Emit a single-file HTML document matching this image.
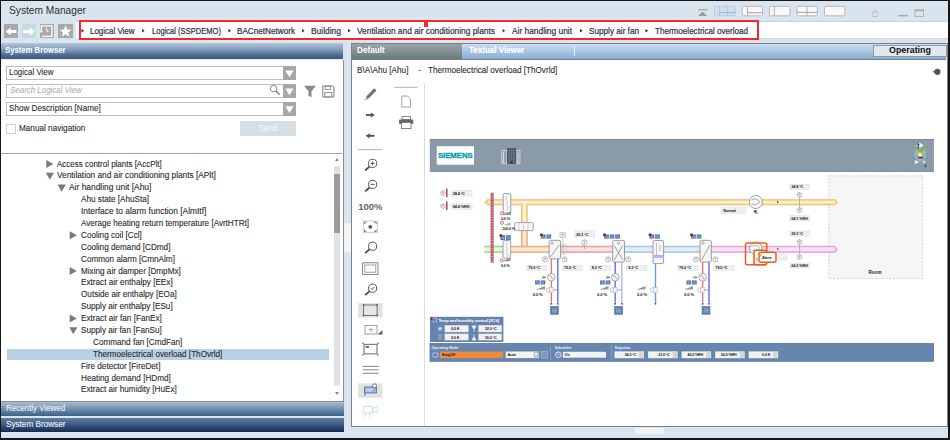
<!DOCTYPE html>
<html><head><meta charset="utf-8">
<style>
*{margin:0;padding:0;box-sizing:border-box}
html,body{width:950px;height:440px;overflow:hidden;background:#161616}
body{position:relative;font-family:"Liberation Sans",sans-serif;font-size:8.6px;color:#222}
.a{position:absolute}
.t{position:absolute;white-space:nowrap;line-height:1}
svg{position:absolute;left:0;top:0}
</style></head><body>
<div class="a" style="left:1.00px;top:1.00px;width:947.00px;height:437.00px;background:#d9e5ee"></div>
<div class="t" style="left:8.90px;top:4.69px;font-size:11px;letter-spacing:0px;color:#2e2e2e;font-weight:normal;font-style:normal;transform:scaleX(0.9261);transform-origin:0 0;">System Manager</div>
<div class="a" style="left:4.00px;top:23.80px;width:14.40px;height:14.20px;background:#a9a9a9"></div>
<div class="a" style="left:21.60px;top:23.80px;width:14.40px;height:14.20px;background:#c1dde2"></div>
<div class="a" style="left:39.80px;top:23.60px;width:14.00px;height:14.20px;background:#a9a9a9"></div>
<div class="a" style="left:58.40px;top:23.80px;width:14.40px;height:14.20px;background:#a9a9a9"></div>
<div class="a" style="left:76.00px;top:21.30px;width:872.00px;height:17.20px;background:#fff;border-top:1.2px solid #c5d3e0"></div>
<div class="a" style="left:76.00px;top:38.40px;width:872.00px;height:0.90px;background:#cfdae4"></div>
<div class="a" style="left:79.10px;top:20.10px;width:679.90px;height:19.90px;border:2px solid #f2282e"></div>
<div class="a" style="left:424.10px;top:20.50px;width:3.90px;height:6.30px;background:#f2282e"></div>
<div class="t" style="left:90.30px;top:26.75px;font-size:8.8px;letter-spacing:0px;color:#26314a;font-weight:normal;font-style:normal;transform:scaleX(0.9036);transform-origin:0 0;-webkit-text-stroke:0.2px #26314a;">Logical View</div>
<div class="t" style="left:151.60px;top:26.75px;font-size:8.8px;letter-spacing:0px;color:#26314a;font-weight:normal;font-style:normal;transform:scaleX(0.8603);transform-origin:0 0;-webkit-text-stroke:0.2px #26314a;">Logical (SSPDEMO)</div>
<div class="t" style="left:237.00px;top:26.75px;font-size:8.8px;letter-spacing:0px;color:#26314a;font-weight:normal;font-style:normal;transform:scaleX(0.9265);transform-origin:0 0;-webkit-text-stroke:0.2px #26314a;">BACnetNetwork</div>
<div class="t" style="left:310.80px;top:26.75px;font-size:8.8px;letter-spacing:0px;color:#26314a;font-weight:normal;font-style:normal;transform:scaleX(0.9581);transform-origin:0 0;-webkit-text-stroke:0.2px #26314a;">Building</div>
<div class="t" style="left:357.40px;top:26.75px;font-size:8.8px;letter-spacing:0px;color:#26314a;font-weight:normal;font-style:normal;transform:scaleX(0.9497);transform-origin:0 0;-webkit-text-stroke:0.2px #26314a;">Ventilation and air conditioning plants</div>
<div class="t" style="left:512.00px;top:26.75px;font-size:8.8px;letter-spacing:0px;color:#26314a;font-weight:normal;font-style:normal;transform:scaleX(0.9507);transform-origin:0 0;-webkit-text-stroke:0.2px #26314a;">Air handling unit</div>
<div class="t" style="left:588.60px;top:26.75px;font-size:8.8px;letter-spacing:0px;color:#26314a;font-weight:normal;font-style:normal;transform:scaleX(0.9292);transform-origin:0 0;-webkit-text-stroke:0.2px #26314a;">Supply air fan</div>
<div class="t" style="left:654.80px;top:26.75px;font-size:8.8px;letter-spacing:0px;color:#26314a;font-weight:normal;font-style:normal;transform:scaleX(0.9185);transform-origin:0 0;-webkit-text-stroke:0.2px #26314a;">Thermoelectrical overload</div>
<div class="a" style="left:1.00px;top:43.40px;width:342.00px;height:16.10px;background:linear-gradient(#b4c6d9 0%,#809bb9 45%,#46678e 85%,#3e5e86 100%);border-bottom:1px solid #555d66"></div>
<div class="t" style="left:4.60px;top:45.65px;font-size:8.8px;letter-spacing:0px;color:#fff;font-weight:bold;font-style:normal;transform:scaleX(0.8772);transform-origin:0 0;">System Browser</div>
<div class="a" style="left:1.00px;top:59.50px;width:343.00px;height:342.50px;background:#fff;border-right:1.5px solid #8a8e94;border-bottom:1.5px solid #8a8e94"></div>
<div class="a" style="left:6.20px;top:66.20px;width:289.80px;height:14.30px;background:#fff;border:1px solid #bdbdbd"></div>
<div class="a" style="left:283.00px;top:66.20px;width:13.00px;height:14.30px;background:#a7a7a7"></div>
<div class="t" style="left:9.00px;top:68.37px;font-size:8.9px;letter-spacing:0px;color:#2c2c2c;font-weight:normal;font-style:normal;transform:scaleX(0.8954);transform-origin:0 0;-webkit-text-stroke:0.1px #2c2c2c;">Logical View</div>
<div class="a" style="left:6.20px;top:84.20px;width:289.80px;height:14.30px;background:#fff;border:1px solid #bdbdbd"></div>
<div class="a" style="left:283.00px;top:84.20px;width:13.00px;height:14.30px;background:#a7a7a7"></div>
<div class="t" style="left:10.00px;top:86.37px;font-size:8.9px;letter-spacing:0px;color:#a8a8a8;font-weight:normal;font-style:italic;transform:scaleX(0.8946);transform-origin:0 0;">Search Logical View</div>
<div class="a" style="left:6.20px;top:102.00px;width:289.80px;height:14.30px;background:#fff;border:1px solid #bdbdbd"></div>
<div class="a" style="left:283.00px;top:102.00px;width:13.00px;height:14.30px;background:#a7a7a7"></div>
<div class="t" style="left:9.00px;top:104.17px;font-size:8.9px;letter-spacing:0px;color:#2c2c2c;font-weight:normal;font-style:normal;transform:scaleX(0.9162);transform-origin:0 0;-webkit-text-stroke:0.1px #2c2c2c;">Show Description [Name]</div>
<div class="a" style="left:6.20px;top:123.50px;width:9.60px;height:10.30px;background:#fff;border:1px solid #d0d0d0"></div>
<div class="t" style="left:18.70px;top:124.07px;font-size:8.9px;letter-spacing:0px;color:#2c2c2c;font-weight:normal;font-style:normal;transform:scaleX(0.9219);transform-origin:0 0;-webkit-text-stroke:0.1px #2c2c2c;">Manual navigation</div>
<div class="a" style="left:240.00px;top:121.30px;width:56.00px;height:14.40px;background:#d5dee3"></div>
<div class="t" style="left:258.60px;top:124.07px;font-size:8.9px;letter-spacing:0px;color:#f7f9fb;font-weight:normal;font-style:normal;transform:scaleX(0.8900);transform-origin:0 0;">Send</div>
<div class="a" style="left:1.00px;top:152.80px;width:341.00px;height:1.20px;background:#a0a4a8"></div>
<div class="t" style="left:57.30px;top:159.57px;font-size:8.9px;letter-spacing:0px;color:#2c2c2c;font-weight:normal;font-style:normal;transform:scaleX(0.8995);transform-origin:0 0;-webkit-text-stroke:0.12px #2c2c2c;">Access control plants [AccPlt]</div>
<div class="t" style="left:57.30px;top:171.46px;font-size:8.9px;letter-spacing:0px;color:#2c2c2c;font-weight:normal;font-style:normal;transform:scaleX(0.9326);transform-origin:0 0;-webkit-text-stroke:0.12px #2c2c2c;">Ventilation and air conditioning plants [APlt]</div>
<div class="t" style="left:69.00px;top:183.35px;font-size:8.9px;letter-spacing:0px;color:#2c2c2c;font-weight:normal;font-style:normal;transform:scaleX(0.9485);transform-origin:0 0;-webkit-text-stroke:0.12px #2c2c2c;">Air handling unit [Ahu]</div>
<div class="t" style="left:81.30px;top:195.24px;font-size:8.9px;letter-spacing:0px;color:#2c2c2c;font-weight:normal;font-style:normal;transform:scaleX(0.9199);transform-origin:0 0;-webkit-text-stroke:0.12px #2c2c2c;">Ahu state [AhuSta]</div>
<div class="t" style="left:81.30px;top:207.13px;font-size:8.9px;letter-spacing:0px;color:#2c2c2c;font-weight:normal;font-style:normal;transform:scaleX(0.9447);transform-origin:0 0;-webkit-text-stroke:0.12px #2c2c2c;">Interface to alarm function [AlmItf]</div>
<div class="t" style="left:81.30px;top:219.02px;font-size:8.9px;letter-spacing:0px;color:#2c2c2c;font-weight:normal;font-style:normal;transform:scaleX(0.9123);transform-origin:0 0;-webkit-text-stroke:0.12px #2c2c2c;">Average heating return temperature [AvrtHTRt]</div>
<div class="t" style="left:81.30px;top:230.91px;font-size:8.9px;letter-spacing:0px;color:#2c2c2c;font-weight:normal;font-style:normal;transform:scaleX(0.9199);transform-origin:0 0;-webkit-text-stroke:0.12px #2c2c2c;">Cooling coil [Ccl]</div>
<div class="t" style="left:81.30px;top:242.80px;font-size:8.9px;letter-spacing:0px;color:#2c2c2c;font-weight:normal;font-style:normal;transform:scaleX(0.9199);transform-origin:0 0;-webkit-text-stroke:0.12px #2c2c2c;">Cooling demand [CDmd]</div>
<div class="t" style="left:81.30px;top:254.69px;font-size:8.9px;letter-spacing:0px;color:#2c2c2c;font-weight:normal;font-style:normal;transform:scaleX(0.9199);transform-origin:0 0;-webkit-text-stroke:0.12px #2c2c2c;">Common alarm [CmnAlm]</div>
<div class="t" style="left:81.30px;top:266.58px;font-size:8.9px;letter-spacing:0px;color:#2c2c2c;font-weight:normal;font-style:normal;transform:scaleX(0.9199);transform-origin:0 0;-webkit-text-stroke:0.12px #2c2c2c;">Mixing air damper [DmpMx]</div>
<div class="t" style="left:81.30px;top:278.47px;font-size:8.9px;letter-spacing:0px;color:#2c2c2c;font-weight:normal;font-style:normal;transform:scaleX(0.9199);transform-origin:0 0;-webkit-text-stroke:0.12px #2c2c2c;">Extract air enthalpy [EEx]</div>
<div class="t" style="left:81.30px;top:290.36px;font-size:8.9px;letter-spacing:0px;color:#2c2c2c;font-weight:normal;font-style:normal;transform:scaleX(0.9199);transform-origin:0 0;-webkit-text-stroke:0.12px #2c2c2c;">Outside air enthalpy [EOa]</div>
<div class="t" style="left:81.30px;top:302.25px;font-size:8.9px;letter-spacing:0px;color:#2c2c2c;font-weight:normal;font-style:normal;transform:scaleX(0.9199);transform-origin:0 0;-webkit-text-stroke:0.12px #2c2c2c;">Supply air enthalpy [ESu]</div>
<div class="t" style="left:81.30px;top:314.14px;font-size:8.9px;letter-spacing:0px;color:#2c2c2c;font-weight:normal;font-style:normal;transform:scaleX(0.9199);transform-origin:0 0;-webkit-text-stroke:0.12px #2c2c2c;">Extract air fan [FanEx]</div>
<div class="t" style="left:81.30px;top:326.03px;font-size:8.9px;letter-spacing:0px;color:#2c2c2c;font-weight:normal;font-style:normal;transform:scaleX(0.9199);transform-origin:0 0;-webkit-text-stroke:0.12px #2c2c2c;">Supply air fan [FanSu]</div>
<div class="t" style="left:93.00px;top:337.92px;font-size:8.9px;letter-spacing:0px;color:#2c2c2c;font-weight:normal;font-style:normal;transform:scaleX(0.9199);transform-origin:0 0;-webkit-text-stroke:0.12px #2c2c2c;">Command fan [CmdFan]</div>
<div class="a" style="left:6.60px;top:348.84px;width:322.70px;height:10.80px;background:#b9d1e6"></div>
<div class="t" style="left:93.00px;top:349.81px;font-size:8.9px;letter-spacing:0px;color:#2c2c2c;font-weight:normal;font-style:normal;transform:scaleX(0.9168);transform-origin:0 0;-webkit-text-stroke:0.12px #2c2c2c;">Thermoelectrical overload [ThOvrld]</div>
<div class="t" style="left:81.30px;top:361.70px;font-size:8.9px;letter-spacing:0px;color:#2c2c2c;font-weight:normal;font-style:normal;transform:scaleX(0.9199);transform-origin:0 0;-webkit-text-stroke:0.12px #2c2c2c;">Fire detector [FireDet]</div>
<div class="t" style="left:81.30px;top:373.59px;font-size:8.9px;letter-spacing:0px;color:#2c2c2c;font-weight:normal;font-style:normal;transform:scaleX(0.9199);transform-origin:0 0;-webkit-text-stroke:0.12px #2c2c2c;">Heating demand [HDmd]</div>
<div class="t" style="left:81.30px;top:385.48px;font-size:8.9px;letter-spacing:0px;color:#2c2c2c;font-weight:normal;font-style:normal;transform:scaleX(0.9155);transform-origin:0 0;-webkit-text-stroke:0.12px #2c2c2c;">Extract air humidity [HuEx]</div>
<div class="a" style="left:333.90px;top:166.40px;width:5.70px;height:219.60px;background:#dfe3e6"></div>
<div class="a" style="left:333.90px;top:174.20px;width:5.70px;height:59.10px;background:#9c9c9c"></div>
<div class="a" style="left:334.5px;top:157.5px;width:0;height:0;border-bottom:3px solid #8a8a8a;border-left:2.5px solid transparent;border-right:2.5px solid transparent"></div>
<div class="a" style="left:334.5px;top:391.5px;width:0;height:0;border-top:3px solid #8a8a8a;border-left:2.5px solid transparent;border-right:2.5px solid transparent"></div>
<div class="a" style="left:344.00px;top:222.80px;width:6.50px;height:29.20px;background:#f2f4f6"></div>
<div class="a" style="left:1.00px;top:401.60px;width:343.00px;height:14.40px;background:linear-gradient(#a7bdd5,#3d5f86)"></div>
<div class="t" style="left:5.70px;top:404.21px;font-size:9.2px;letter-spacing:0px;color:#e8eef5;font-weight:normal;font-style:normal;transform:scaleX(0.8675);transform-origin:0 0;-webkit-text-stroke:0.15px #e8eef5;">Recently Viewed</div>
<div class="a" style="left:1.00px;top:418.00px;width:343.00px;height:13.80px;background:linear-gradient(#5f7fa5,#142c52)"></div>
<div class="t" style="left:5.70px;top:420.21px;font-size:9.2px;letter-spacing:0px;color:#e8eef5;font-weight:normal;font-style:normal;transform:scaleX(0.8884);transform-origin:0 0;-webkit-text-stroke:0.15px #e8eef5;">System Browser</div>
<div class="a" style="left:350.50px;top:43.00px;width:597.00px;height:384.40px;background:#fff;border:1.6px solid #7d8186"></div>
<div class="a" style="left:634.70px;top:427.60px;width:29.70px;height:6.10px;background:#f1f2f3"></div>
<div class="a" style="left:352.00px;top:43.60px;width:110.30px;height:15.40px;background:linear-gradient(#9ba5a7,#6c7a7a)"></div>
<div class="a" style="left:462.30px;top:43.60px;width:483.70px;height:15.40px;background:linear-gradient(#cbdef1,#87acd3)"></div>
<div class="a" style="left:352.00px;top:59.00px;width:594.00px;height:1.00px;background:#6d7f8f"></div>
<div class="a" style="left:573.80px;top:45.70px;width:1.00px;height:10.00px;background:#e6eef6"></div>
<div class="t" style="left:356.70px;top:45.95px;font-size:8.8px;letter-spacing:0px;color:#fff;font-weight:bold;font-style:normal;transform:scaleX(0.9287);transform-origin:0 0;">Default</div>
<div class="t" style="left:468.50px;top:45.95px;font-size:8.8px;letter-spacing:0px;color:#ffffff;font-weight:bold;font-style:normal;transform:scaleX(0.9126);transform-origin:0 0;-webkit-text-stroke:0.15px #fff;">Textual Viewer</div>
<div class="a" style="left:873.20px;top:44.60px;width:73.40px;height:12.40px;background:#e3e8ee;border:1px solid #8f9aa6"></div>
<div class="t" style="left:888.70px;top:45.87px;font-size:8.9px;letter-spacing:0px;color:#111;font-weight:bold;font-style:normal;transform:scaleX(0.9992);transform-origin:0 0;">Operating</div>
<div class="t" style="left:356.70px;top:65.97px;font-size:8.9px;letter-spacing:0px;color:#2c2c2c;font-weight:normal;font-style:normal;transform:scaleX(0.9229);transform-origin:0 0;-webkit-text-stroke:0.1px #2c2c2c;">B\A\Ahu [Ahu]</div>
<div class="t" style="left:418.00px;top:66.22px;font-size:8.6px;letter-spacing:-0.3px;color:#333;font-weight:normal;font-style:normal;">-</div>
<div class="t" style="left:428.00px;top:65.97px;font-size:8.9px;letter-spacing:0px;color:#2c2c2c;font-weight:normal;font-style:normal;transform:scaleX(0.9161);transform-origin:0 0;-webkit-text-stroke:0.1px #2c2c2c;">Thermoelectrical overload [ThOvrld]</div>
<svg width="950" height="440" viewBox="0 0 950 440">
<rect x="358.2" y="149.1" width="24.2" height="1" fill="#b4b4b4"/>
<rect x="394" y="86.8" width="23.6" height="1" fill="#b4b4b4"/>
<rect x="424" y="83.6" width="1" height="342" fill="#dcdcdc"/>
<path d="M374.2 88.3 L376.5 90.6 L368.8 98.3 L366.1 99.1 L366.5 96.2 Z" fill="#707070"/><path d="M364.3 99.9 Q365.8 99.1 367.6 99.7" fill="none" stroke="#909090" stroke-width="0.8"/>
<path d="M366 115 L371.5 115" stroke="#555" stroke-width="1.9"/><path d="M370.8 112.4 L374.8 115 L370.8 117.6 Z" fill="#555"/>
<path d="M369 135.8 L374.5 135.8" stroke="#555" stroke-width="1.9"/><path d="M369.7 133.2 L365.7 135.8 L369.7 138.4 Z" fill="#555"/>
<path d="M401.8 96 L407.5 96 L410.5 99 L410.5 107 L401.8 107 Z" fill="#fff" stroke="#9a9a9a" stroke-width="0.9"/>
<rect x="402" y="116.6" width="8.5" height="3" fill="none" stroke="#777" stroke-width="0.9"/><rect x="399" y="119.5" width="14.3" height="4.5" rx="1" fill="#666"/><rect x="401.5" y="122.5" width="9.5" height="6" fill="#fff" stroke="#777" stroke-width="0.9"/>
<circle cx="372.6" cy="163.4" r="4.1" fill="#fff" stroke="#555" stroke-width="1"/><path d="M369.70000000000005 166.3 L365.20000000000005 170.3" stroke="#444" stroke-width="1.8"/><path d="M370.6 163.4 H374.6 M372.6 161.4 V165.4" stroke="#444" stroke-width="0.9"/>
<circle cx="372.6" cy="184.4" r="4.1" fill="#fff" stroke="#555" stroke-width="1"/><path d="M369.70000000000005 187.3 L365.20000000000005 191.3" stroke="#444" stroke-width="1.8"/><path d="M370.6 184.4 H374.6" stroke="#444" stroke-width="0.9"/>
<circle cx="372.6" cy="246.2" r="4.1" fill="#fff" stroke="#555" stroke-width="1"/><path d="M369.70000000000005 249.1 L365.20000000000005 253.1" stroke="#444" stroke-width="1.8"/>
<circle cx="372.6" cy="288.2" r="4.1" fill="#fff" stroke="#555" stroke-width="1"/><path d="M369.70000000000005 291.09999999999997 L365.20000000000005 295.09999999999997" stroke="#444" stroke-width="1.8"/><path d="M370.8 288.2 L372.20000000000005 289.59999999999997 L374.6 286.59999999999997" fill="none" stroke="#444" stroke-width="0.9"/>
<rect x="363.3" y="221" width="14" height="11.6" fill="#fff" stroke="#bbb" stroke-width="0.7"/><circle cx="370.3" cy="226.8" r="1.9" fill="#555"/>
<path d="M364.5 224 V222.2 H366.5 M374 222.2 H376.2 V224 M364.5 229.6 V231.4 H366.5 M374 231.4 H376.2 V229.6" fill="none" stroke="#555" stroke-width="0.8"/>
<rect x="362.6" y="262.8" width="15.4" height="11.6" fill="#fff" stroke="#777" stroke-width="0.9"/><rect x="364.8" y="265" width="11" height="7.2" fill="#fff" stroke="#888" stroke-width="0.8"/>
<rect x="358.2" y="303.1" width="24.2" height="14.5" fill="#e1e1e1"/><rect x="363.5" y="305" width="13.6" height="10.4" fill="#e6e6e6" stroke="#666" stroke-width="0.9"/>
<circle cx="363.5" cy="305" r="0.9" fill="#3a62a8"/>
<circle cx="377.1" cy="305" r="0.9" fill="#3a62a8"/>
<circle cx="363.5" cy="315.4" r="0.9" fill="#3a62a8"/>
<circle cx="377.1" cy="315.4" r="0.9" fill="#3a62a8"/>
<rect x="365" y="325.5" width="12" height="8.5" fill="#fff" stroke="#888" stroke-width="0.8"/><path d="M368.5 329.7 H373.5 M371 327.5 V332" stroke="#777" stroke-width="0.6"/><path d="M382.4 330 V334.5 H377.6 Z" fill="#3a5fa0"/>
<rect x="364" y="344.3" width="13" height="9.6" fill="#fff" stroke="#555" stroke-width="0.9"/><rect x="365.5" y="346" width="3.5" height="1.8" fill="#666"/>
<circle cx="363" cy="343.3" r="0.7" fill="#444"/>
<circle cx="378" cy="343.3" r="0.7" fill="#444"/>
<circle cx="363" cy="355" r="0.7" fill="#444"/>
<circle cx="378" cy="355" r="0.7" fill="#444"/>
<path d="M362.7 366.4 H378.7 M362.7 369.8 H378.7 M362.7 373.3 H378.7" stroke="#777" stroke-width="0.9"/>
<rect x="358.2" y="383.3" width="24.2" height="14.5" fill="#e1e1e1"/><rect x="364.5" y="387" width="12" height="6" fill="#9db3d4" stroke="#4a6fa8" stroke-width="0.8"/><path d="M366 393 L364.3 396" stroke="#4a6fa8" stroke-width="0.9"/><circle cx="374.5" cy="385.8" r="2" fill="#fff" stroke="#4a6fa8" stroke-width="0.9"/><path d="M366.3 389.2 H373 M366.3 391 H372" stroke="#fff" stroke-width="0.6"/>
<rect x="363.6" y="406.5" width="9" height="6.5" fill="none" stroke="#c7e1ea" stroke-width="0.9"/><path d="M372.6 408.5 L377.3 406.3 V413 L372.6 411" fill="none" stroke="#c7e1ea" stroke-width="0.9"/><path d="M366 413 L364.5 417.8 M369 413 L370.5 417.8" stroke="#c7e1ea" stroke-width="0.9"/>
<text x="358.2" y="209.6" font-family="Liberation Sans" font-weight="bold" font-size="9.6" fill="#666" letter-spacing="-0.1">100%</text>
<rect x="429.8" y="139.1" width="504.1" height="32.6" fill="#8a9aa8"/><rect x="429.8" y="139.1" width="504.1" height="0.9" fill="#77889a"/><rect x="429.8" y="170.9" width="504.1" height="0.9" fill="#7a8a9b"/>
<rect x="436.7" y="146.2" width="37.3" height="18.5" fill="#fff"/>
<text x="437.9" y="158.3" font-family="Liberation Sans" font-weight="bold" font-size="8.1" fill="#0a9aa0" stroke="#0a9aa0" stroke-width="0.35" textLength="34.8" lengthAdjust="spacingAndGlyphs">SIEMENS</text>
<rect x="501.8" y="150.4" width="5" height="13.4" fill="#95a2ad" stroke="#e4e8ec" stroke-width="0.6"/><rect x="516" y="150.4" width="4" height="13.4" fill="#95a2ad" stroke="#e4e8ec" stroke-width="0.6"/>
<path d="M503.5 152.5 V163 M518 152.5 V163" stroke="#f2f4f6" stroke-width="0.7"/>
<rect x="506.9" y="148" width="9.2" height="15.9" rx="0.8" fill="#4d5864"/>
<path d="M507.5 150.6 H515.5 M507.5 152.8 H515.5 M507.5 155 H515.5 M507.5 157.2 H515.5 M507.5 159.4 H515.5 M507.5 161.6 H515.5 M509.2 149 V163 M511.5 149 V163 M513.8 149 V163" stroke="#7b8792" stroke-width="0.5"/>
<circle cx="511.5" cy="162" r="0.9" fill="#222"/>
<path d="M914.7 149 L920.3 151.5 L925.8 149 V159 L920.3 161.6 L914.7 159 Z" fill="#7fc0df"/>
<path d="M915.5 145.5 L920 142.8 L923.8 145.5 L920 148 Z" fill="#e8edf1"/>
<path d="M914.3 146.4 L920.3 150 L926.2 146.4 V149 L920.3 152.4 L914.3 149 Z" fill="#8db43d"/>
<path d="M918.3 144.8 V148.5" stroke="#1b4a80" stroke-width="1.1"/><path d="M916.9 145.2 L918.3 143 L919.7 145.2 Z" fill="#1b4a80"/>
<circle cx="920.5" cy="155.2" r="3.3" fill="#f39a1d"/><path d="M917.2 155.2 A3.3 3.3 0 0 1 920.5 151.9 V155.2 Z" fill="#c9d23c"/><path d="M917.6 156.8 A3.3 3.3 0 0 0 923.4 156.8 Z" fill="#1d3f6b"/><circle cx="920.2" cy="155" r="1.7" fill="#fff"/>
<path d="M913 158.6 H927" stroke="#6d7a86" stroke-width="0.6"/>
<path d="M914.8 160 L919 162.1 L914.8 164.4 Z" fill="#eef2f5"/><path d="M925.5 160 L921.8 162 L925.5 164 Z" fill="#cdd5dc"/>
<path d="M925.6 163 L926.7 166.8 Q925.6 168.2 924.5 166.8 Z" fill="#1e64a0"/>
<rect x="828.8" y="175.9" width="93.6" height="102.8" fill="#f6f6f6" stroke="#c8c8c8" stroke-width="0.8" stroke-dasharray="2 1.5"/>
<text x="875" y="274" text-anchor="middle" font-family="Liberation Sans" font-weight="bold" font-size="4.6" fill="#222">Room</text>
<rect x="487" y="199.1" width="348" height="6.200000000000017" fill="#f5c768"/><rect x="487" y="200.7" width="348" height="3.000000000000017" fill="#f8efdf"/>
<path d="M484 202.2 L487.5 199.1 L487.5 205.3 Z" fill="#f5c768"/>
<path d="M835 199.1 L838 202.2 L835 205.3 Z" fill="#f5c768"/>
<rect x="521" y="204" width="6.7999999999999545" height="18.599999999999994" fill="#f5c768"/><rect x="522.6" y="204" width="3.5999999999999543" height="18.599999999999994" fill="#f8efdf"/>
<rect x="521" y="230.6" width="6.7999999999999545" height="16.0" fill="#f4ae76"/><rect x="522.6" y="230.6" width="3.5999999999999543" height="16.0" fill="#f6e9de"/>
<rect x="484" y="245.7" width="19.5" height="7.200000000000017" fill="#9fd88a"/><rect x="484" y="247.29999999999998" width="19.5" height="4.000000000000017" fill="#e8f5e2"/>
<path d="M483 245.39999999999998 L486.5 249.2 L483 253.20000000000002 Z" fill="#fff"/>
<rect x="511" y="245.7" width="38.5" height="7.200000000000017" fill="#f4ae76"/><rect x="511" y="247.29999999999998" width="38.5" height="4.000000000000017" fill="#f6e9de"/>
<rect x="560.4" y="245.7" width="52.39999999999998" height="7.200000000000017" fill="#eca2a4"/><rect x="560.4" y="247.29999999999998" width="52.39999999999998" height="4.000000000000017" fill="#f5e6e6"/>
<rect x="624.5" y="245.7" width="75.70000000000005" height="7.200000000000017" fill="#a9c7e7"/><rect x="624.5" y="247.29999999999998" width="75.70000000000005" height="4.000000000000017" fill="#e4ecf4"/>
<rect x="711.3" y="245.7" width="123.70000000000005" height="7.200000000000017" fill="#e7a8e2"/><rect x="711.3" y="247.29999999999998" width="123.70000000000005" height="4.000000000000017" fill="#f4e4f2"/>
<path d="M835 245.7 L838 249.2 L835 252.9 Z" fill="#e7a8e2"/>
<rect x="490.6" y="192.7" width="3" height="70" fill="#b5535f"/>
<path d="M492.1 193.5 V262.5" stroke="#e2a9b0" stroke-width="1.3" stroke-dasharray="1.1 1.5"/>
<rect x="503.2" y="193.6" width="7.600000000000023" height="19.400000000000006" rx="1.5" fill="#f7f7f7" stroke="#8c8c8c" stroke-width="0.8"/><path d="M507.0 195.6 l-1 3 l1.5 3 l-1 3 l1.5 3 l-1 3" fill="none" stroke="#9a9a9a" stroke-width="0.5"/>
<rect x="503" y="240.7" width="7.699999999999989" height="17.400000000000034" rx="1.5" fill="#f7f7f7" stroke="#8c8c8c" stroke-width="0.8"/><path d="M506.85 242.7 l-1 3 l1.5 3 l-1 3 l1.5 3 l-1 3" fill="none" stroke="#9a9a9a" stroke-width="0.5"/>
<rect x="514.7" y="222.6" width="18.6" height="8" rx="1.5" fill="#f7f7f7" stroke="#8c8c8c" stroke-width="0.8"/><path d="M519 223.5 V230 M523.5 223.5 V230 M528 223.5 V230" stroke="#aaa" stroke-width="0.5"/>
<rect x="549.1" y="240.3" width="11.399999999999977" height="18.599999999999966" rx="1.6" fill="#f5f5f5" stroke="#858585" stroke-width="0.8"/><path d="M550.6 256.9 L559.0 245.3" stroke="#666" stroke-width="0.6"/><circle cx="552.1" cy="243.10000000000002" r="1.2" fill="none" stroke="#777" stroke-width="0.5"/>
<rect x="612.7" y="240.4" width="11.799999999999955" height="21.599999999999994" rx="1.6" fill="#f5f5f5" stroke="#858585" stroke-width="0.8"/><path d="M614.2 260 L623.0 245.4 M614.2 245.4 L623.0 260" stroke="#666" stroke-width="0.6"/><circle cx="618.6" cy="243.20000000000002" r="1.2" fill="none" stroke="#777" stroke-width="0.5"/>
<rect x="700" y="240.3" width="11.299999999999955" height="21.69999999999999" rx="1.6" fill="#f5f5f5" stroke="#858585" stroke-width="0.8"/><path d="M701.5 260 L709.8 245.3" stroke="#666" stroke-width="0.6"/><circle cx="703" cy="243.10000000000002" r="1.2" fill="none" stroke="#777" stroke-width="0.5"/>
<rect x="653" y="240.4" width="10.6" height="23.2" rx="1.6" fill="#f5f5f5" stroke="#858585" stroke-width="0.8"/><rect x="653.6" y="255" width="9.4" height="3" fill="#b9b2f0"/><path d="M656.5 243 V256 M659 246 H661 M659 248 H661 M659 250 H661" stroke="#888" stroke-width="0.5"/>
<rect x="561" y="244.3" width="5.4" height="10" rx="1.2" fill="none" stroke="#b0b0b0" stroke-width="0.5"/><path d="M563.7 244.5 V254.3" stroke="#bbb" stroke-width="0.4"/>
<rect x="560" y="232.8" width="5.5" height="4.9" fill="#f2f2f2" stroke="#999" stroke-width="0.5"/><path d="M561.5 234.3 H564 M562.75 234.3 V236.3" stroke="#555" stroke-width="0.45"/><path d="M562.8 237.7 V254.3" stroke="#aaa" stroke-width="0.6"/>
<rect x="550.75" y="258.9" width="1.3" height="43.80000000000001" fill="#f07060"/>
<rect x="557.0" y="258.9" width="1.6" height="43.80000000000001" fill="#7080f0"/>
<rect x="614.4000000000001" y="262" width="1.6" height="40.69999999999999" fill="#7080f0"/>
<rect x="621.0999999999999" y="262" width="1.4" height="40.69999999999999" fill="#b0b8f8"/>
<rect x="654.8" y="263.6" width="1.4" height="39.39999999999998" fill="#5aa0f0"/>
<rect x="702.0500000000001" y="262" width="1.3" height="40.69999999999999" fill="#f07060"/>
<rect x="708.2" y="262" width="1.6" height="40.69999999999999" fill="#7080f0"/>
<rect x="551.4" y="289.5" width="6.399999999999977" height="0.8" fill="#7080f0"/>
<rect x="615.2" y="289.5" width="6.599999999999909" height="0.8" fill="#7080f0"/>
<rect x="702.7" y="289.5" width="6.2999999999999545" height="0.8" fill="#7080f0"/>
<rect x="550.6" y="303" width="1.6" height="1.6" fill="#3050d0"/>
<rect x="557.0" y="303" width="1.6" height="1.6" fill="#3050d0"/>
<rect x="614.4000000000001" y="303" width="1.6" height="1.6" fill="#3050d0"/>
<rect x="621.0" y="303" width="1.6" height="1.6" fill="#3050d0"/>
<rect x="654.7" y="303" width="1.6" height="1.6" fill="#3050d0"/>
<rect x="701.9000000000001" y="303" width="1.6" height="1.6" fill="#3050d0"/>
<rect x="708.2" y="303" width="1.6" height="1.6" fill="#3050d0"/>
<rect x="550.5" y="306.4" width="8.0" height="8.0" fill="#5f7fae" stroke="#4a6a9a" stroke-width="0.5"/><path d="M552.0 308.9 H557.0 M552.0 310.4 H557.0 M552.0 311.9 H557.0" stroke="#c0d0e6" stroke-width="0.5"/>
<rect x="614.5" y="306.4" width="8.200000000000045" height="8.0" fill="#5f7fae" stroke="#4a6a9a" stroke-width="0.5"/><path d="M616.0 308.9 H621.2 M616.0 310.4 H621.2 M616.0 311.9 H621.2" stroke="#c0d0e6" stroke-width="0.5"/>
<rect x="702" y="306.4" width="8" height="8.0" fill="#5f7fae" stroke="#4a6a9a" stroke-width="0.5"/><path d="M703.5 308.9 H708.5 M703.5 310.4 H708.5 M703.5 311.9 H708.5" stroke="#c0d0e6" stroke-width="0.5"/>
<circle cx="545" cy="259.3" r="2.6" fill="#fafafa" stroke="#8a8a8a" stroke-width="0.6"/><path d="M544 258.5 H546 M545 258.5 V260.3" stroke="#555" stroke-width="0.4"/>
<circle cx="564.5" cy="259.3" r="2.6" fill="#fafafa" stroke="#8a8a8a" stroke-width="0.6"/><path d="M563.5 258.5 H565.5 M564.5 258.5 V260.3" stroke="#555" stroke-width="0.4"/>
<circle cx="608.2" cy="259.3" r="2.6" fill="#fafafa" stroke="#8a8a8a" stroke-width="0.6"/><path d="M607.2 258.5 H609.2 M608.2 258.5 V260.3" stroke="#555" stroke-width="0.4"/>
<circle cx="628.2" cy="259.3" r="2.6" fill="#fafafa" stroke="#8a8a8a" stroke-width="0.6"/><path d="M627.2 258.5 H629.2 M628.2 258.5 V260.3" stroke="#555" stroke-width="0.4"/>
<circle cx="696" cy="259.3" r="2.6" fill="#fafafa" stroke="#8a8a8a" stroke-width="0.6"/><path d="M695 258.5 H697 M696 258.5 V260.3" stroke="#555" stroke-width="0.4"/>
<circle cx="715.5" cy="259.3" r="2.6" fill="#fafafa" stroke="#8a8a8a" stroke-width="0.6"/><path d="M714.5 258.5 H716.5 M715.5 258.5 V260.3" stroke="#555" stroke-width="0.4"/>
<path d="M584.5 245 V249" stroke="#999" stroke-width="0.6"/>
<circle cx="584.5" cy="242.6" r="2.6" fill="#fafafa" stroke="#8a8a8a" stroke-width="0.6"/><path d="M583.5 241.79999999999998 H585.5 M584.5 241.79999999999998 V243.6" stroke="#555" stroke-width="0.4"/>
<path d="M799.5 192 V213 M799.5 239 V260" stroke="#999" stroke-width="0.6"/>
<circle cx="799.5" cy="195" r="2.3" fill="#fafafa" stroke="#8a8a8a" stroke-width="0.6"/><path d="M798.5 194.2 H800.5 M799.5 194.2 V196" stroke="#555" stroke-width="0.4"/>
<circle cx="799.5" cy="210" r="2.3" fill="#fafafa" stroke="#8a8a8a" stroke-width="0.6"/><path d="M798.5 209.2 H800.5 M799.5 209.2 V211" stroke="#555" stroke-width="0.4"/>
<circle cx="799.5" cy="242" r="2.3" fill="#fafafa" stroke="#8a8a8a" stroke-width="0.6"/><path d="M798.5 241.2 H800.5 M799.5 241.2 V243" stroke="#555" stroke-width="0.4"/>
<circle cx="799.5" cy="257" r="2.3" fill="#fafafa" stroke="#8a8a8a" stroke-width="0.6"/><path d="M798.5 256.2 H800.5 M799.5 256.2 V258" stroke="#555" stroke-width="0.4"/>
<circle cx="443" cy="193" r="2.3" fill="#fafafa" stroke="#8a8a8a" stroke-width="0.6"/><path d="M442 192.2 H444 M443 192.2 V194" stroke="#555" stroke-width="0.4"/>
<circle cx="443" cy="206" r="2.3" fill="#fafafa" stroke="#8a8a8a" stroke-width="0.6"/><path d="M442 205.2 H444 M443 205.2 V207" stroke="#555" stroke-width="0.4"/>
<rect x="446" y="188.5" width="1.6" height="8.5" fill="#c05060"/><rect x="446" y="201.5" width="1.6" height="8.5" fill="#c05060"/>
<circle cx="551.3" cy="277.3" r="3.8" fill="#f7f7f7" stroke="#8a8a8a" stroke-width="0.7"/><path d="M549.0999999999999 276.1 Q550.8 275.1 551.5999999999999 277.3 T553.5 278.90000000000003" fill="none" stroke="#666" stroke-width="0.6"/><rect x="542.0" y="276.5" width="3.8" height="1.8" fill="#888"/>
<circle cx="615.3" cy="277.3" r="3.8" fill="#f7f7f7" stroke="#8a8a8a" stroke-width="0.7"/><path d="M613.0999999999999 276.1 Q614.8 275.1 615.5999999999999 277.3 T617.5 278.90000000000003" fill="none" stroke="#666" stroke-width="0.6"/><rect x="606.0" y="276.5" width="3.8" height="1.8" fill="#888"/>
<circle cx="702.7" cy="277.3" r="3.8" fill="#f7f7f7" stroke="#8a8a8a" stroke-width="0.7"/><path d="M700.5 276.1 Q702.2 275.1 703.0 277.3 T704.9000000000001 278.90000000000003" fill="none" stroke="#666" stroke-width="0.6"/><rect x="693.4000000000001" y="276.5" width="3.8" height="1.8" fill="#888"/>
<circle cx="548.4" cy="290" r="2.2" fill="#f7f7f7" stroke="#999" stroke-width="0.5"/><rect x="549.6" y="287.5" width="3.6" height="5" fill="#f2f2f2" stroke="#aaa" stroke-width="0.5"/>
<circle cx="612.2" cy="290" r="2.2" fill="#f7f7f7" stroke="#999" stroke-width="0.5"/><rect x="613.4000000000001" y="287.5" width="3.6" height="5" fill="#f2f2f2" stroke="#aaa" stroke-width="0.5"/>
<circle cx="652.5" cy="290" r="2.2" fill="#f7f7f7" stroke="#999" stroke-width="0.5"/><rect x="653.7" y="287.5" width="3.6" height="5" fill="#f2f2f2" stroke="#aaa" stroke-width="0.5"/>
<circle cx="699.7" cy="290" r="2.2" fill="#f7f7f7" stroke="#999" stroke-width="0.5"/><rect x="700.9000000000001" y="287.5" width="3.6" height="5" fill="#f2f2f2" stroke="#aaa" stroke-width="0.5"/>
<path d="M537 289.6 L545 286.40000000000003 L545 289.6 Z" fill="#9a9a9a"/><path d="M537 289.6 L545 286.40000000000003" stroke="#555" stroke-width="0.4"/>
<text x="532.7" y="296" font-family="Liberation Sans" font-weight="bold" font-size="4.2" fill="#222" text-anchor="start" letter-spacing="-0.15">0.0 %</text>
<path d="M600.5 289.6 L608.5 286.40000000000003 L608.5 289.6 Z" fill="#9a9a9a"/><path d="M600.5 289.6 L608.5 286.40000000000003" stroke="#555" stroke-width="0.4"/>
<text x="597" y="296" font-family="Liberation Sans" font-weight="bold" font-size="4.2" fill="#222" text-anchor="start" letter-spacing="-0.15">0.0 %</text>
<path d="M637.5 289.6 L645.5 286.40000000000003 L645.5 289.6 Z" fill="#9a9a9a"/><path d="M637.5 289.6 L645.5 286.40000000000003" stroke="#555" stroke-width="0.4"/>
<text x="637" y="296" font-family="Liberation Sans" font-weight="bold" font-size="4.2" fill="#222" text-anchor="start" letter-spacing="-0.15">0.0 %</text>
<path d="M685 289.6 L693 286.40000000000003 L693 289.6 Z" fill="#9a9a9a"/><path d="M685 289.6 L693 286.40000000000003" stroke="#555" stroke-width="0.4"/>
<text x="684" y="296" font-family="Liberation Sans" font-weight="bold" font-size="4.2" fill="#222" text-anchor="start" letter-spacing="-0.15">0.0 %</text>
<path d="M503 215 L511 211.8 L511 215 Z" fill="#9a9a9a"/><path d="M503 215 L511 211.8" stroke="#555" stroke-width="0.4"/>
<text x="501.1" y="219.9" font-family="Liberation Sans" font-weight="bold" font-size="3.7" fill="#222" text-anchor="start" letter-spacing="-0.15">0.0 %</text>
<path d="M503.5 225.3 L510.5 222.2 L510.5 225.3 Z" fill="#7ad06a"/>
<text x="501.4" y="230.1" font-family="Liberation Sans" font-weight="bold" font-size="3.7" fill="#222" text-anchor="start" letter-spacing="-0.15">-100.0 %</text>
<path d="M502.5 261.2 L510.5 258.0 L510.5 261.2 Z" fill="#9a9a9a"/><path d="M502.5 261.2 L510.5 258.0" stroke="#555" stroke-width="0.4"/>
<text x="501" y="267" font-family="Liberation Sans" font-weight="bold" font-size="3.7" fill="#222" text-anchor="start" letter-spacing="-0.15">0.0 %</text>
<circle cx="502" cy="213.3" r="1.5" fill="#fff" stroke="#c33" stroke-width="0.7"/>
<circle cx="502" cy="222.9" r="1.5" fill="#fff" stroke="#c33" stroke-width="0.7"/>
<circle cx="501.5" cy="260.2" r="1.5" fill="#fff" stroke="#c33" stroke-width="0.7"/>
<rect x="500.4" y="235.1" width="4.8" height="5.099999999999994" fill="#5a7db5"/><path d="M501.7 236.29999999999998 L503.9 239.2" stroke="#dce6f4" stroke-width="0.6"/><rect x="506.0" y="235.1" width="4.8" height="5.099999999999994" fill="#5a7db5"/><path d="M507.3 236.29999999999998 L509.5 239.2" stroke="#dce6f4" stroke-width="0.6"/><circle cx="500.9" cy="235.4" r="1.5" fill="#a01818"/>
<rect x="540.8" y="234.4" width="4.8" height="4.199999999999989" fill="#5a7db5"/><path d="M542.0999999999999 235.6 L544.3 237.6" stroke="#dce6f4" stroke-width="0.6"/><rect x="546.4" y="234.4" width="4.8" height="4.199999999999989" fill="#5a7db5"/><path d="M547.6999999999999 235.6 L549.9 237.6" stroke="#dce6f4" stroke-width="0.6"/><circle cx="541.3" cy="234.70000000000002" r="1.5" fill="#a01818"/>
<rect x="604.0" y="234.4" width="4.8" height="4.199999999999989" fill="#5a7db5"/><path d="M605.3 235.6 L607.5 237.6" stroke="#dce6f4" stroke-width="0.6"/><rect x="609.6" y="234.4" width="4.8" height="4.199999999999989" fill="#5a7db5"/><path d="M610.9 235.6 L613.1 237.6" stroke="#dce6f4" stroke-width="0.6"/><rect x="615.2" y="234.4" width="4.8" height="4.199999999999989" fill="#5a7db5"/><path d="M616.5 235.6 L618.7 237.6" stroke="#dce6f4" stroke-width="0.6"/><circle cx="604.5" cy="234.70000000000002" r="1.5" fill="#a01818"/>
<rect x="649.5" y="234.4" width="4.8" height="4.199999999999989" fill="#5a7db5"/><path d="M650.8 235.6 L653.0 237.6" stroke="#dce6f4" stroke-width="0.6"/><rect x="655.1" y="234.4" width="4.8" height="4.199999999999989" fill="#5a7db5"/><path d="M656.4 235.6 L658.6 237.6" stroke="#dce6f4" stroke-width="0.6"/><circle cx="650.0" cy="234.70000000000002" r="1.5" fill="#a01818"/>
<rect x="691.0" y="234.4" width="4.8" height="4.199999999999989" fill="#5a7db5"/><path d="M692.3 235.6 L694.5 237.6" stroke="#dce6f4" stroke-width="0.6"/><rect x="696.6" y="234.4" width="4.8" height="4.199999999999989" fill="#5a7db5"/><path d="M697.9 235.6 L700.1 237.6" stroke="#dce6f4" stroke-width="0.6"/><circle cx="691.5" cy="234.70000000000002" r="1.5" fill="#a01818"/>
<rect x="535.0" y="280.4" width="4.8" height="4.100000000000023" fill="#5a7db5"/><path d="M536.3 281.59999999999997 L538.5 283.5" stroke="#dce6f4" stroke-width="0.6"/><rect x="540.6" y="280.4" width="4.8" height="4.100000000000023" fill="#5a7db5"/><path d="M541.9 281.59999999999997 L544.1 283.5" stroke="#dce6f4" stroke-width="0.6"/>
<rect x="600.0" y="280.4" width="4.8" height="4.100000000000023" fill="#5a7db5"/><path d="M601.3 281.59999999999997 L603.5 283.5" stroke="#dce6f4" stroke-width="0.6"/><rect x="605.6" y="280.4" width="4.8" height="4.100000000000023" fill="#5a7db5"/><path d="M606.9 281.59999999999997 L609.1 283.5" stroke="#dce6f4" stroke-width="0.6"/>
<rect x="686.4" y="280.4" width="4.8" height="4.100000000000023" fill="#5a7db5"/><path d="M687.6999999999999 281.59999999999997 L689.9 283.5" stroke="#dce6f4" stroke-width="0.6"/><rect x="692.0" y="280.4" width="4.8" height="4.100000000000023" fill="#5a7db5"/><path d="M693.3 281.59999999999997 L695.5 283.5" stroke="#dce6f4" stroke-width="0.6"/>
<rect x="526.4" y="265.5" width="20.600000000000023" height="5.100000000000023" fill="#eef0f2" stroke="#d2dde8" stroke-width="0.5"/><text x="528.1999999999999" y="269.3" font-family="Liberation Sans" font-weight="bold" font-size="3.9" fill="#222" text-anchor="start" letter-spacing="-0.15">79.0 °C</text>
<rect x="562.2" y="265.5" width="20.5" height="5.100000000000023" fill="#eef0f2" stroke="#d2dde8" stroke-width="0.5"/><text x="564.0" y="269.3" font-family="Liberation Sans" font-weight="bold" font-size="3.9" fill="#222" text-anchor="start" letter-spacing="-0.15">79.0 °C</text>
<rect x="590" y="265.5" width="20.5" height="5.100000000000023" fill="#eef0f2" stroke="#d2dde8" stroke-width="0.5"/><text x="591.8" y="269.3" font-family="Liberation Sans" font-weight="bold" font-size="3.9" fill="#222" text-anchor="start" letter-spacing="-0.15">8.2 °C</text>
<rect x="626.4" y="265.5" width="20.600000000000023" height="5.100000000000023" fill="#eef0f2" stroke="#d2dde8" stroke-width="0.5"/><text x="628.1999999999999" y="269.3" font-family="Liberation Sans" font-weight="bold" font-size="3.9" fill="#222" text-anchor="start" letter-spacing="-0.15">8.2 °C</text>
<rect x="677.3" y="265.5" width="20.5" height="5.100000000000023" fill="#eef0f2" stroke="#d2dde8" stroke-width="0.5"/><text x="679.0999999999999" y="269.3" font-family="Liberation Sans" font-weight="bold" font-size="3.9" fill="#222" text-anchor="start" letter-spacing="-0.15">79.0 °C</text>
<rect x="713.6" y="265.5" width="20.600000000000023" height="5.100000000000023" fill="#eef0f2" stroke="#d2dde8" stroke-width="0.5"/><text x="715.4" y="269.3" font-family="Liberation Sans" font-weight="bold" font-size="3.9" fill="#222" text-anchor="start" letter-spacing="-0.15">79.0 °C</text>
<rect x="574.3" y="230.8" width="20.5" height="6.0" fill="#eef0f2" stroke="#d2dde8" stroke-width="0.5"/><text x="576.0999999999999" y="235.5" font-family="Liberation Sans" font-weight="bold" font-size="3.9" fill="#222" text-anchor="start" letter-spacing="-0.15">29.3 °C</text>
<rect x="451" y="190.2" width="21" height="5.900000000000006" fill="#eef0f2" stroke="#d2dde8" stroke-width="0.5"/><text x="452.8" y="194.79999999999998" font-family="Liberation Sans" font-weight="bold" font-size="3.9" fill="#222" text-anchor="start" letter-spacing="-0.15">28.4 °C</text>
<rect x="451" y="203.5" width="21" height="5.800000000000011" fill="#eef0f2" stroke="#d2dde8" stroke-width="0.5"/><text x="452.8" y="208.0" font-family="Liberation Sans" font-weight="bold" font-size="3.9" fill="#222" text-anchor="start" letter-spacing="-0.15">84.4 %RH</text>
<rect x="721.5" y="207.6" width="24.5" height="5.700000000000017" fill="#eef0f2" stroke="#d2dde8" stroke-width="0.5"/><text x="723.3" y="212.0" font-family="Liberation Sans" font-weight="bold" font-size="3.9" fill="#222" text-anchor="start" letter-spacing="-0.15">Normal</text>
<rect x="789.5" y="184.5" width="20.0" height="5.099999999999994" fill="#eef0f2" stroke="#d2dde8" stroke-width="0.5"/><text x="791.3" y="188.29999999999998" font-family="Liberation Sans" font-weight="bold" font-size="3.9" fill="#222" text-anchor="start" letter-spacing="-0.15">24.8 °C</text>
<rect x="789.5" y="215.7" width="20.0" height="5.100000000000023" fill="#eef0f2" stroke="#d2dde8" stroke-width="0.5"/><text x="791.3" y="219.5" font-family="Liberation Sans" font-weight="bold" font-size="3.9" fill="#222" text-anchor="start" letter-spacing="-0.15">64.1 %RH</text>
<rect x="789.5" y="231" width="20.0" height="5.099999999999994" fill="#eef0f2" stroke="#d2dde8" stroke-width="0.5"/><text x="791.3" y="234.79999999999998" font-family="Liberation Sans" font-weight="bold" font-size="3.9" fill="#222" text-anchor="start" letter-spacing="-0.15">29.3 °C</text>
<rect x="789.5" y="263" width="20.0" height="5.100000000000023" fill="#eef0f2" stroke="#d2dde8" stroke-width="0.5"/><text x="791.3" y="266.8" font-family="Liberation Sans" font-weight="bold" font-size="3.9" fill="#222" text-anchor="start" letter-spacing="-0.15">64.2 %RH</text>
<rect x="778" y="254.5" width="9" height="5.5" fill="#eef0f2" stroke="#d2dde8" stroke-width="0.5"/><text x="779.8" y="258.7" font-family="Liberation Sans" font-weight="bold" font-size="3.9" fill="#222" text-anchor="start" letter-spacing="-0.15"></text>
<circle cx="755.8" cy="202" r="6.6" fill="#f7f7f7" stroke="#8a8a8a" stroke-width="0.8"/><path d="M751.5 200 Q756 197 760 202 Q756 206 751.5 204" fill="none" stroke="#777" stroke-width="0.6"/><circle cx="755.3" cy="211.5" r="1.4" fill="#b02020"/><rect x="755.5" y="212" width="2" height="2.2" fill="#999"/>
<circle cx="755.8" cy="248.3" r="6.3" fill="#f7f7f7" stroke="#8a8a8a" stroke-width="0.8"/><path d="M751 247 Q755 243.5 760 247.5 M751.5 249.5 Q756 252.5 760 248.5" fill="none" stroke="#8a8a8a" stroke-width="0.5"/>
<path d="M777 201 L779 202 L777 203 Z M777 248 L779 249 L777 250 Z" fill="#333"/>
<rect x="745.5" y="243" width="21.3" height="21.7" rx="2" fill="none" stroke="#e8601c" stroke-width="1.5"/>
<rect x="754" y="250.3" width="12.8" height="14.4" rx="2" fill="#f7f7f7" stroke="#e8601c" stroke-width="1.5"/>
<rect x="759" y="252.3" width="17" height="10" rx="2" fill="#fafafa" stroke="#e8601c" stroke-width="1.5"/>
<rect x="759.8" y="254" width="1.8" height="2.5" fill="#f0c020"/>
<text x="762" y="259.3" font-family="Liberation Sans" font-weight="bold" font-size="3.6" fill="#222" text-anchor="start" letter-spacing="-0.15">Alarm</text>
<rect x="755.5" y="257.5" width="2.8" height="4" fill="#ccc"/>
<rect x="430" y="316.8" width="73.4" height="25.2" fill="#6583ad"/>
<circle cx="432.2" cy="319" r="1.6" fill="#b01818"/>
<rect x="433" y="318" width="3.5" height="4" fill="none" stroke="#dfe6f0" stroke-width="0.5"/>
<text x="438.5" y="322.4" font-family="Liberation Sans" font-weight="bold" font-size="4.4" fill="#fff" text-anchor="start" letter-spacing="-0.15" textLength="60.4" lengthAdjust="spacingAndGlyphs">Temp and humidity control [XCtl]</text>
<rect x="444.9" y="325.3" width="23.400000000000034" height="6.699999999999989" fill="#f2f2f2" stroke="#dde" stroke-width="0.4"/><text x="450.9" y="330.4" font-family="Liberation Sans" font-weight="bold" font-size="3.9" fill="#222" text-anchor="start" letter-spacing="-0.15">0.0 K</text>
<rect x="444.9" y="333.9" width="23.400000000000034" height="6.2000000000000455" fill="#f2f2f2" stroke="#dde" stroke-width="0.4"/><text x="450.9" y="338.5" font-family="Liberation Sans" font-weight="bold" font-size="3.9" fill="#222" text-anchor="start" letter-spacing="-0.15">0.0 K</text>
<rect x="478.7" y="325.3" width="23.0" height="6.699999999999989" fill="#f2f2f2" stroke="#dde" stroke-width="0.4"/><text x="484.7" y="330.4" font-family="Liberation Sans" font-weight="bold" font-size="3.9" fill="#222" text-anchor="start" letter-spacing="-0.15">32.0 °C</text>
<rect x="478.7" y="333.9" width="23.0" height="6.2000000000000455" fill="#f2f2f2" stroke="#dde" stroke-width="0.4"/><text x="484.7" y="338.5" font-family="Liberation Sans" font-weight="bold" font-size="3.9" fill="#222" text-anchor="start" letter-spacing="-0.15">16.0 °C</text>
<path d="M440 326.5 V331 M437.8 328.7 H442.2 M438.4 327 L441.6 330.4 M441.6 327 L438.4 330.4" stroke="#e8eef6" stroke-width="0.7"/>
<path d="M438 335 H442 M438 337 H442 M438 339 H442" stroke="#b8c8e0" stroke-width="0.7"/>
<path d="M472 326 H476 L474 329 Z M474 329 V332" stroke="#f0f4fa" fill="#f0f4fa" stroke-width="0.8"/>
<path d="M474 334.5 V338 M472 340 L474 337 L476 340 Z" stroke="#f0f4fa" fill="#f0f4fa" stroke-width="0.8"/>
<rect x="430" y="343.5" width="503.6" height="17.8" fill="#6686af" stroke="#5876a0" stroke-width="0.8"/>
<text x="431.4" y="348.8" font-family="Liberation Sans" font-weight="bold" font-size="3.8" fill="#e6ecf4" text-anchor="start" letter-spacing="-0.15">Operating Mode</text>
<text x="554.5" y="348.8" font-family="Liberation Sans" font-weight="bold" font-size="3.8" fill="#e6ecf4" text-anchor="start" letter-spacing="-0.15">Scheduler</text>
<text x="614.5" y="348.8" font-family="Liberation Sans" font-weight="bold" font-size="3.8" fill="#e6ecf4" text-anchor="start" letter-spacing="-0.15">Setpoints</text>
<rect x="550.3" y="345.5" width="0.8" height="14.5" fill="#8aa4c8"/><rect x="611.2" y="345.5" width="0.8" height="14.5" fill="#8aa4c8"/>
<rect x="440" y="351.5" width="63.1" height="6.6" fill="#f08a3c"/><text x="442" y="356.4" font-family="Liberation Sans" font-weight="bold" font-size="3.9" fill="#222" text-anchor="start" letter-spacing="-0.15">EmgOff</text>
<path d="M433 353 H438 V357 H433 Z" fill="none" stroke="#d8e0ec" stroke-width="0.6"/>
<rect x="505.7" y="351.5" width="32.9" height="6.6" fill="#f4f4f4"/><rect x="533.8" y="352" width="4.5" height="5.6" fill="#bbb"/><path d="M534.6 353.3 H537.5 L536.05 356.2 Z" fill="#fff"/><text x="507.5" y="356.4" font-family="Liberation Sans" font-weight="bold" font-size="3.9" fill="#222" text-anchor="start" letter-spacing="-0.15">Auto</text>
<rect x="541.2" y="351.2" width="6.2" height="6.8" fill="#7e98bc" stroke="#aabbd6" stroke-width="0.6"/>
<circle cx="558.4" cy="354.8" r="2.8" fill="none" stroke="#eef2f8" stroke-width="0.9"/><path d="M558.2 353 V355.2 H559.6" fill="none" stroke="#eef2f8" stroke-width="0.6"/><rect x="562.9" y="351.8" width="43.1" height="5.9" fill="#f2f2f2"/><text x="564.5" y="356.3" font-family="Liberation Sans" font-weight="bold" font-size="3.9" fill="#222" text-anchor="start" letter-spacing="-0.15">On</text>
<rect x="614.5" y="351.4" width="29.5" height="6.8" fill="#f2f2f2"/><rect x="639.0" y="351.6" width="4.6" height="6.4" fill="#d6d6d6"/><text x="636.0" y="356.4" font-family="Liberation Sans" font-weight="bold" font-size="3.7" fill="#222" text-anchor="end" letter-spacing="-0.15">24.0 °C</text>
<rect x="648.05" y="351.4" width="29.5" height="6.8" fill="#f2f2f2"/><rect x="672.55" y="351.6" width="4.6" height="6.4" fill="#d6d6d6"/><text x="669.55" y="356.4" font-family="Liberation Sans" font-weight="bold" font-size="3.7" fill="#222" text-anchor="end" letter-spacing="-0.15">21.0 °C</text>
<rect x="681.6" y="351.4" width="29.5" height="6.8" fill="#f2f2f2"/><rect x="706.1" y="351.6" width="4.6" height="6.4" fill="#d6d6d6"/><text x="703.1" y="356.4" font-family="Liberation Sans" font-weight="bold" font-size="3.7" fill="#222" text-anchor="end" letter-spacing="-0.15">40.0 %RH</text>
<rect x="715.15" y="351.4" width="29.5" height="6.8" fill="#f2f2f2"/><rect x="739.65" y="351.6" width="4.6" height="6.4" fill="#d6d6d6"/><text x="736.65" y="356.4" font-family="Liberation Sans" font-weight="bold" font-size="3.7" fill="#222" text-anchor="end" letter-spacing="-0.15">60.0 %RH</text>
<rect x="748.7" y="351.4" width="29.5" height="6.8" fill="#f2f2f2"/><rect x="773.2" y="351.6" width="4.6" height="6.4" fill="#d6d6d6"/><text x="770.2" y="356.4" font-family="Liberation Sans" font-weight="bold" font-size="3.7" fill="#222" text-anchor="end" letter-spacing="-0.15">0.0 K</text>
<path d="M46.3 159.9 L53.4 163.9 L46.3 167.9 Z" fill="#7a7a7a"/>
<path d="M45.8 172.69 L54.0 172.69 L49.9 179.79000000000002 Z" fill="#7a7a7a"/>
<path d="M57.6 184.57999999999998 L65.8 184.57999999999998 L61.7 191.68 Z" fill="#7a7a7a"/>
<path d="M69.7 231.24 L76.8 235.24 L69.7 239.24 Z" fill="#7a7a7a"/>
<path d="M69.7 266.91 L76.8 270.91 L69.7 274.91 Z" fill="#7a7a7a"/>
<path d="M69.7 314.46999999999997 L76.8 318.46999999999997 L69.7 322.46999999999997 Z" fill="#7a7a7a"/>
<path d="M69.2 327.26 L77.39999999999999 327.26 L73.3 334.36 Z" fill="#7a7a7a"/>
<path d="M81.5 29 L84.1 30.7 L81.5 32.4 Z" fill="#1f2d4a"/>
<path d="M142 29 L144.6 30.7 L142 32.4 Z" fill="#1f2d4a"/>
<path d="M228.4 29 L231.0 30.7 L228.4 32.4 Z" fill="#1f2d4a"/>
<path d="M302 29 L304.6 30.7 L302 32.4 Z" fill="#1f2d4a"/>
<path d="M348 29 L350.6 30.7 L348 32.4 Z" fill="#1f2d4a"/>
<path d="M502.6 29 L505.20000000000005 30.7 L502.6 32.4 Z" fill="#1f2d4a"/>
<path d="M580 29 L582.6 30.7 L580 32.4 Z" fill="#1f2d4a"/>
<path d="M645.5 29 L648.1 30.7 L645.5 32.4 Z" fill="#1f2d4a"/>
<path d="M5.6 31.4 L10.6 27.6 V29.9 H16.4 V32.9 H10.6 V35.2 Z" fill="#fff"/>
<path d="M34.8 31.4 L29.8 27.6 V29.9 H23.2 V32.9 H29.8 V35.2 Z" fill="#fff"/>
<path d="M41.3 31.4 V25.9 H51.9 V36.3 H42" fill="none" stroke="#fff" stroke-width="1.3"/><circle cx="41.4" cy="31.6" r="1.1" fill="#fff"/><path d="M46.4 28 L47 30.6 L48.4 31.8" fill="none" stroke="#fff" stroke-width="1.1"/>
<path d="M65.6 25.2 L67.3 29.6 L71.7 29.7 L68.2 32.4 L69.4 36.7 L65.6 34.2 L61.8 36.7 L63 32.4 L59.5 29.7 L63.9 29.6 Z" fill="#fff"/>
<rect x="698" y="9.2" width="9.2" height="1.1" fill="#9a9a9a"/><path d="M698 15.9 L702.6 11.4 L707.2 15.9 Z" fill="#9a9a9a"/>
<rect x="714.5" y="6.3" width="20.7" height="9.4" rx="1" fill="#cfe0f1" stroke="#aec2d6" stroke-width="0.7"/><path d="M719.3 6.3 V15.7 M727.4 6.3 V15.7" stroke="#a9bdd1" stroke-width="0.7"/><path d="M719.3 12.6 H735.2" stroke="#9cb0c4" stroke-width="0.9"/>
<rect x="742.2" y="6.3" width="20.399999999999977" height="9.5" rx="1.2" fill="#f8f8f8" stroke="#ababab" stroke-width="0.8"/><path d="M747.5 6.5 V15.6" stroke="#a8a8a8" stroke-width="0.9"/><path d="M747.5 12.7 H762.6" stroke="#a8a8a8" stroke-width="1.1"/>
<rect x="769.5" y="6.3" width="20.399999999999977" height="9.5" rx="1.2" fill="#f8f8f8" stroke="#ababab" stroke-width="0.8"/><path d="M774.4 6.5 V15.6" stroke="#a8a8a8" stroke-width="0.9"/>
<rect x="797" y="6.3" width="20.299999999999955" height="9.5" rx="1.2" fill="#f8f8f8" stroke="#ababab" stroke-width="0.8"/><path d="M807 6.5 V15.6" stroke="#a8a8a8" stroke-width="0.9"/><path d="M797 12.4 H817.3" stroke="#a8a8a8" stroke-width="1.1"/>
<rect x="824.5" y="6.3" width="20.299999999999955" height="9.5" rx="1.2" fill="#f8f8f8" stroke="#ababab" stroke-width="0.8"/>
<rect x="872.3" y="12.3" width="5.8" height="4.2" rx="0.8" fill="none" stroke="#b5bcc3" stroke-width="0.9"/><path d="M873.5 12.3 V10.8 Q875.2 8.8 876.9 10.8 V12.3" fill="none" stroke="#b5bcc3" stroke-width="0.9"/>
<rect x="898" y="14.8" width="10" height="1.6" fill="#a7adb3"/>
<rect x="914.8" y="9.8" width="8.8" height="6.6" fill="none" stroke="#a7adb3" stroke-width="0.9"/><rect x="914.8" y="9.8" width="8.8" height="1.5" fill="#a7adb3"/>
<path d="M285.3 70.4 L293.6 70.4 L289.45 77.2 Z" fill="#fff"/>
<path d="M285.3 88.4 L293.6 88.4 L289.45 95.2 Z" fill="#fff"/>
<path d="M285.3 106.2 L293.6 106.2 L289.45 113 Z" fill="#fff"/>
<circle cx="273.6" cy="88.6" r="3.3" fill="none" stroke="#7a7a7a" stroke-width="0.9"/><path d="M276 91 L279.6 94.8" stroke="#7a7a7a" stroke-width="1.3"/>
<path d="M304 85.8 H316 L311.5 91.3 V97.2 L308.5 95.7 V91.3 Z" fill="#8a8a8a"/>
<path d="M322.8 86 H332.5 L333.9 87.4 V97 H322.8 Z" fill="none" stroke="#8a8a8a" stroke-width="1.1"/><rect x="325.2" y="86" width="5.2" height="3.5" fill="none" stroke="#8a8a8a" stroke-width="0.9"/><rect x="324.8" y="92.5" width="7" height="4.5" fill="none" stroke="#8a8a8a" stroke-width="0.9"/>
<circle cx="937.4" cy="71.8" r="3.1" fill="#555"/><path d="M932.6 71.8 H935" stroke="#555" stroke-width="1"/>
</svg>
</body></html>
